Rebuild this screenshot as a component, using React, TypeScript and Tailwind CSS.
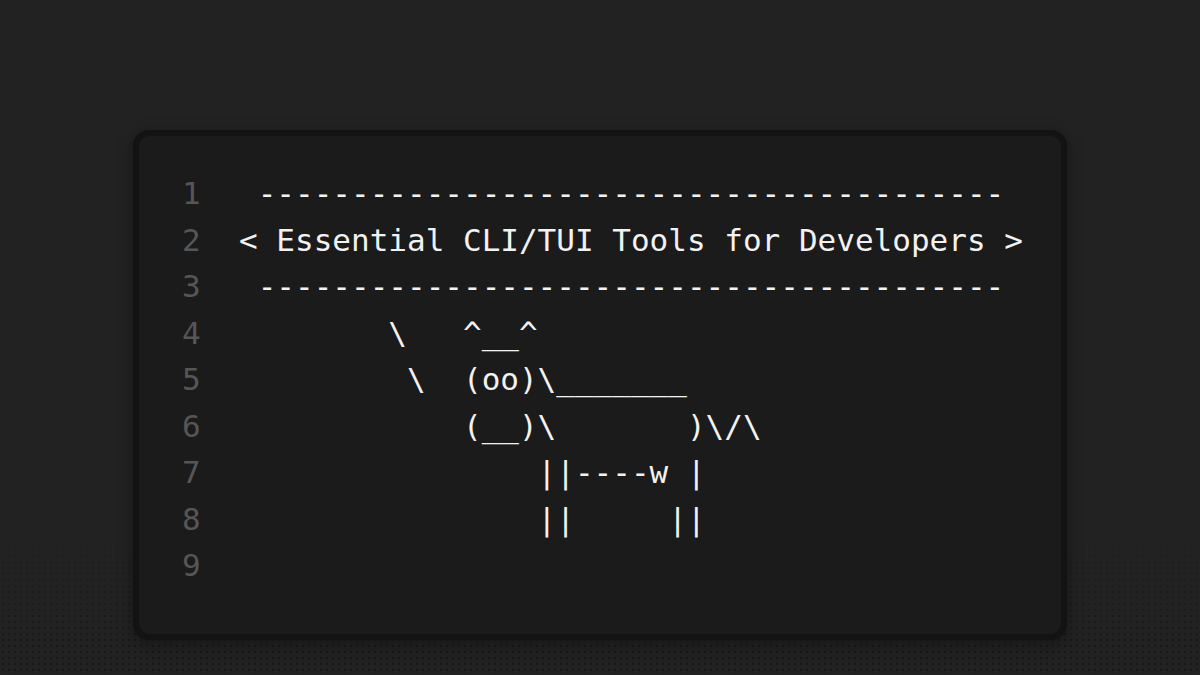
import React from "react";

const lines = [
  " ----------------------------------------",
  "< Essential CLI/TUI Tools for Developers >",
  " ----------------------------------------",
  "        \\   ^__^",
  "         \\  (oo)\\_______",
  "            (__)\\       )\\/\\",
  "                ||----w |",
  "                ||     ||",
  "",
];

export default function App() {
  return (
    <div className="relative w-[1200px] h-[675px] overflow-hidden bg-[#222222] flex justify-center pt-[130px]">
      <div className="absolute inset-x-0 bottom-0 h-[140px] bg-[radial-gradient(circle,#161616_1.2px,transparent_1.6px)] [background-size:6px_6px] [mask-image:linear-gradient(to_bottom,transparent,black)] opacity-90" />
      <div className="relative w-[934px] h-[510px] rounded-[16px] bg-[#131313] p-[6px] shadow-[0_4px_16px_rgba(0,0,0,0.35)]">
        <div className="w-full h-full rounded-[11px] bg-[#1b1b1b] pt-[34px] pl-[43px] font-['DejaVu_Sans_Mono',monospace] text-[31px] leading-[46.5px]">
          {lines.map((l, i) => (
            <div key={i} className="flex whitespace-pre">
              <span className="w-[57px] text-[#565656]">{i + 1}</span>
              <span className="text-[#f2f2f2]">{l}</span>
            </div>
          ))}
        </div>
      </div>
    </div>
  );
}
